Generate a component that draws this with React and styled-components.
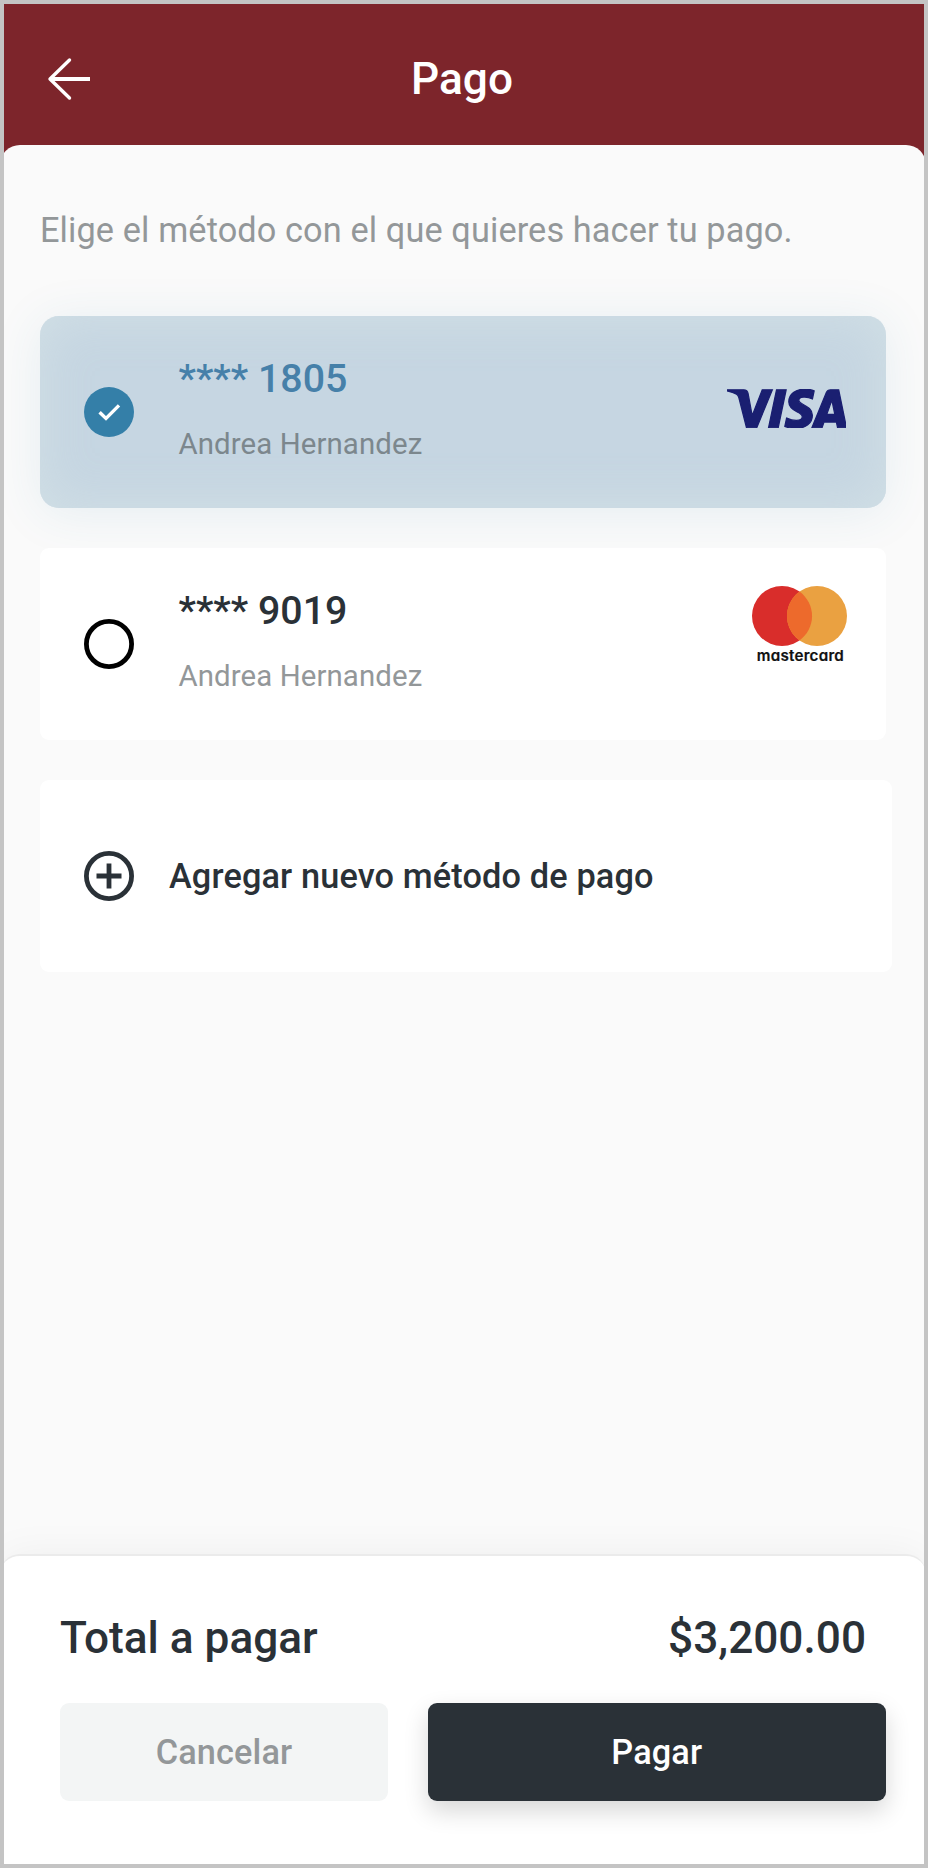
import React, { useState } from 'react';
import styled, { createGlobalStyle } from 'styled-components';
import { SiVisa } from 'react-icons/si';

const cards = [
  {
    id: 1, brand: 'visa', digits: '1805', owner: 'Andrea Hernandez',
  },
  {
    id: 2, brand: 'mastercard', digits: '9019', owner: 'Andrea Hernandez',
  },
];

function ArrowIcon() {
  return (
    <svg width="46" height="44" viewBox="0 0 46 44" fill="none" stroke="#fff">
      <path d="M4 22H44" strokeWidth="4" />
      <path d="M23.5 3L4 22L23.5 41" strokeWidth="3.4" strokeLinecap="round" strokeLinejoin="round" />
    </svg>
  );
}

function CheckedIcon() {
  return (
    <svg width="50" height="50" viewBox="0 0 50 50" fill="none">
      <circle cx="25" cy="25" r="25" fill="#347fa8" />
      <path d="M15.6 25.2L22 31.4L35 18.4" stroke="#fff" strokeWidth="3.4" />
    </svg>
  );
}

function UncheckedIcon() {
  return (
    <svg width="50" height="50" viewBox="0 0 50 50" fill="none">
      <circle cx="25" cy="25" r="22.6" stroke="#000" strokeWidth="4.8" />
    </svg>
  );
}

function AddIcon() {
  return (
    <svg width="50" height="50" viewBox="0 0 50 50" fill="none" stroke="#2a3137">
      <circle cx="25" cy="25" r="22.6" strokeWidth="4.8" />
      <path d="M12.5 25H37.5M25 12.5V37.5" strokeWidth="4.8" />
    </svg>
  );
}

function MastercardLogo() {
  return (
    <svg width="95" height="82" viewBox="0 0 95 82">
      <circle cx="30" cy="30" r="30" fill="#d92d2b" />
      <circle cx="65" cy="30" r="30" fill="#eaa141" />
      <path d="M47.5 5.6A30 30 0 0 1 47.5 54.4A30 30 0 0 1 47.5 5.6Z" fill="#ed6a2c" />
      <LogoText x="4.8" y="75" textLength="87">mastercard</LogoText>
    </svg>
  );
}

function PaymentCard({ card, selected, onSelect }) {
  return (
    <Card $selected={selected} onClick={() => onSelect(card.id)}>
      {selected ? <CheckedIcon /> : <UncheckedIcon />}
      <CardInfo>
        <CardNumber $selected={selected}>{`**** ${card.digits}`}</CardNumber>
        <CardOwner $selected={selected}>{card.owner}</CardOwner>
      </CardInfo>
      {card.brand === 'visa'
        ? <VisaLogo viewBox="0 8.1 24 7.8" preserveAspectRatio="none" />
        : <MastercardBrand><MastercardLogo /></MastercardBrand>}
    </Card>
  );
}

function App() {
  const [selectedId, setSelectedId] = useState(1);
  return (
    <>
      <GlobalStyle />
      <Screen>
        <Header>
          <BackButton type="button" aria-label="Volver"><ArrowIcon /></BackButton>
          <Title>Pago</Title>
        </Header>
        <Content>
          <Intro>Elige el método con el que quieres hacer tu pago.</Intro>
          <Methods>
            {cards.map((card) => (
              <PaymentCard
                key={card.id}
                card={card}
                selected={card.id === selectedId}
                onSelect={setSelectedId}
              />
            ))}
            <AddCard>
              <AddIcon />
              <AddLabel>Agregar nuevo método de pago</AddLabel>
            </AddCard>
          </Methods>
        </Content>
        <Footer>
          <Total>
            <span>Total a pagar</span>
            <span>$3,200.00</span>
          </Total>
          <Actions>
            <CancelButton type="button">Cancelar</CancelButton>
            <PayButton type="button">Pagar</PayButton>
          </Actions>
        </Footer>
      </Screen>
    </>
  );
}

const GlobalStyle = createGlobalStyle`
  * {
    box-sizing: border-box;
  }
  body {
    margin: 0;
    font-family: Roboto, sans-serif;
  }
  svg {
    display: block;
    flex-shrink: 0;
  }
`;

const Screen = styled('div')`
  display: flex;
  flex-direction: column;
  width: 928px;
  height: 1868px;
  border: 4px solid #c4c4c4;
  background: #7d252b;
  overflow: hidden;
`;

const Header = styled('header')`
  display: grid;
  grid-template-columns: 126px 1fr 130px;
  align-items: center;
  height: 140.5px;
  padding-top: 9px;
`;

const BackButton = styled('button')`
  justify-self: start;
  margin-left: 41.5px;
  padding: 0;
  border: none;
  background: none;
  cursor: pointer;
`;

const Title = styled('h1')`
  margin: 0;
  color: #fff;
  font-size: 44.2px;
  font-weight: 500;
  line-height: 52px;
  text-align: center;
`;

/* runs under the footer so its rounded corners sit on the light sheet */
const Content = styled('main')`
  flex: 1;
  margin: 0 -2px -24px -4px;
  padding: 65px 34px 0 40px;
  border-radius: 20px 20px 0 0;
  background: #fafafa;
`;

const Intro = styled('p')`
  margin: 0 0 66px;
  color: #939799;
  font-size: 34.3px;
  letter-spacing: 0.11px;
  line-height: 40px;
`;

const Methods = styled('div')`
  display: flex;
  flex-direction: column;
  gap: 39.5px;
`;

const Card = styled('div')`
  display: flex;
  align-items: center;
  width: 846px;
  height: 192.5px;
  padding: 0 39px 0 44px;
  border-radius: ${(props) => (props.$selected ? '19px' : '9px')};
  background: ${(props) => (props.$selected ? '#c6d6e2' : '#fff')};
  box-shadow: ${(props) => (props.$selected
    ? '0 5px 49px rgba(52, 127, 168, 0.1), inset 0 0 50px rgba(212, 226, 230, 0.8)'
    : 'none')};
  cursor: pointer;
`;

const CardInfo = styled('div')`
  flex: 1;
  margin: -5px 0 0 44.5px;
`;

const CardNumber = styled('div')`
  color: ${(props) => (props.$selected ? '#4680a9' : '#2a3137')};
  font-size: 39.3px;
  font-weight: 500;
  line-height: 46px;
`;

const CardOwner = styled('div')`
  margin-top: 24px;
  color: ${(props) => (props.$selected ? '#7c878d' : '#939799')};
  font-size: 29.4px;
  letter-spacing: 0.1px;
  line-height: 36px;
`;

const VisaLogo = styled(SiVisa)`
  width: 119.5px;
  height: 39.5px;
  margin: -7px 1px 0 0;
  color: #1a1f71;
  stroke: #1a1f71;
  stroke-width: 0.25;
`;

const MastercardBrand = styled('div')`
  margin-top: -33px;
`;

const LogoText = styled('text')`
  fill: #111;
  stroke: #111;
  stroke-width: 0.2;
  font-family: Inter, sans-serif;
  font-size: 15.2px;
  font-weight: 600;
  font-feature-settings: 'cv11';
`;

const AddCard = styled(Card)`
  width: 852px;
`;

const AddLabel = styled('span')`
  margin-left: 35px;
  color: #2a3137;
  font-size: 34.3px;
  font-weight: 500;
  letter-spacing: 0.13px;
  line-height: 40px;
`;

const Footer = styled('footer')`
  position: relative;
  height: 310px;
  margin: 0 -2px 0 -4px;
  padding: 56px 40px 0 60px;
  border-top: 2px solid #ebebeb;
  border-radius: 20px 20px 0 0;
  background: #fff;
  box-shadow: 0 0 40px rgba(0, 0, 0, 0.05);
`;

const Total = styled('div')`
  display: flex;
  justify-content: space-between;
  padding-right: 20px;
  color: #2a3137;
  font-size: 44.2px;
  font-weight: 500;
  line-height: 52px;
`;

const Actions = styled('div')`
  display: flex;
  gap: 39.5px;
  margin-top: 38.5px;
`;

const Button = styled('button')`
  height: 98.5px;
  padding: 0;
  border: none;
  border-radius: 9px;
  font-family: inherit;
  font-size: 34.3px;
  font-weight: 500;
  letter-spacing: 0.12px;
  cursor: pointer;
`;

const CancelButton = styled(Button)`
  width: 328px;
  background: #f3f5f5;
  color: #939799;
`;

const PayButton = styled(Button)`
  flex: 1;
  background: #2a3137;
  color: #fff;
  box-shadow: 0 10px 25px rgba(0, 0, 0, 0.16);
`;

export default App;
